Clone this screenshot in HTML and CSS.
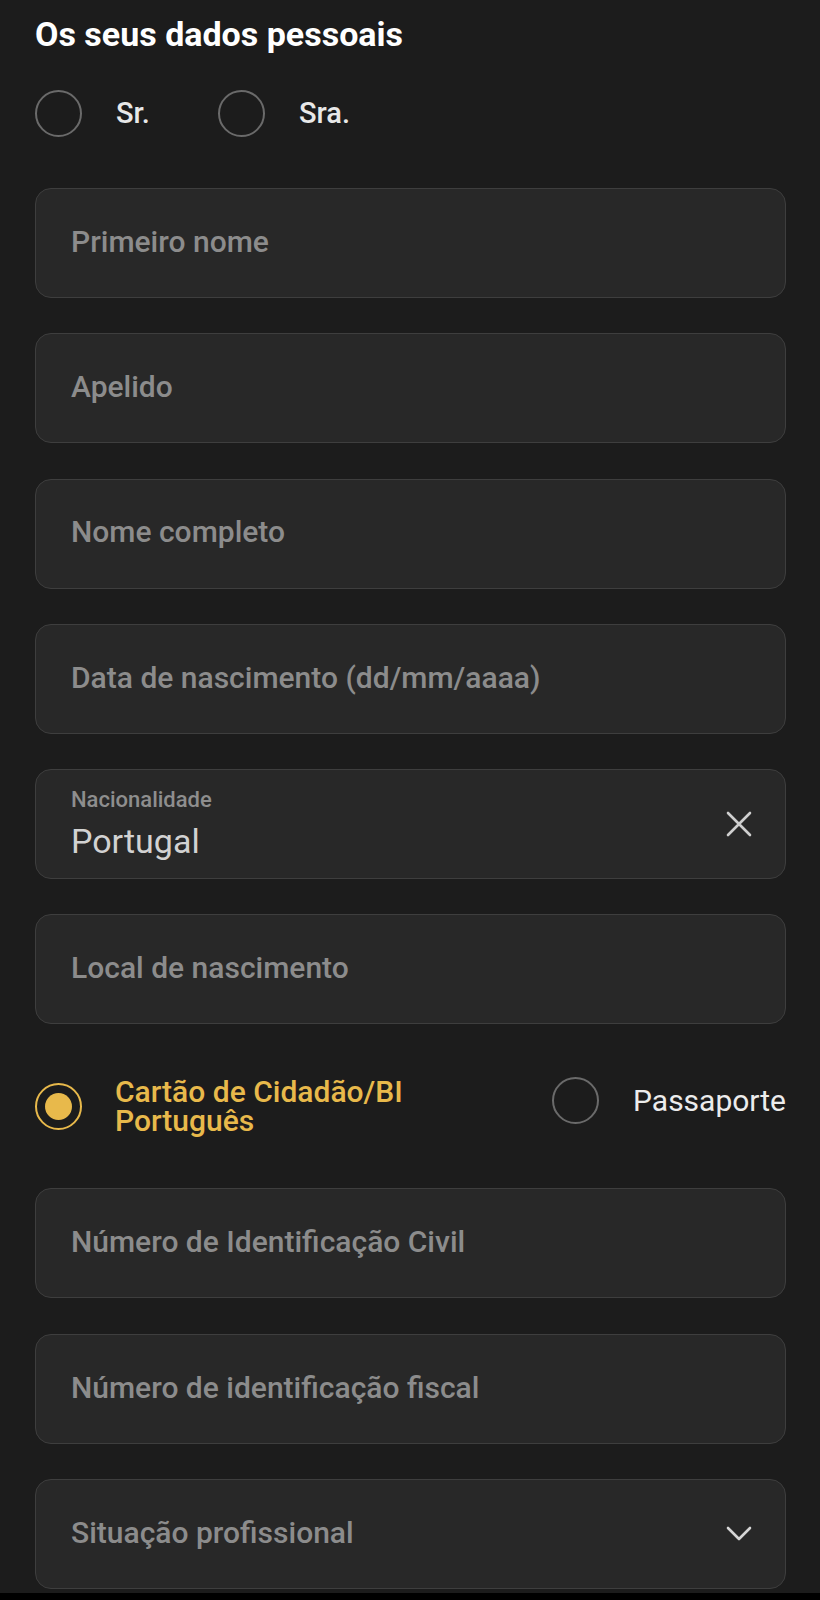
FILE: index.html
```html
<!DOCTYPE html>
<html lang="pt">
<head>
<meta charset="utf-8">
<title>Os seus dados pessoais</title>
<link rel="stylesheet" href="styles.css">
</head>
<body>
<main class="page">
  <h1 class="title">Os seus dados pessoais</h1>

  <div class="gender">
    <label class="radio radio-gender"><span class="dot"></span><span class="radio-text">Sr.</span></label>
    <label class="radio radio-gender"><span class="dot"></span><span class="radio-text">Sra.</span></label>
  </div>

  <div class="fields">
    <div class="field"><span class="placeholder">Primeiro nome</span></div>
    <div class="field"><span class="placeholder">Apelido</span></div>
    <div class="field"><span class="placeholder">Nome completo</span></div>
    <div class="field"><span class="placeholder">Data de nascimento (dd/mm/aaaa)</span></div>
    <div class="field field-filled">
      <div class="filled">
        <span class="float-label">Nacionalidade</span>
        <span class="value">Portugal</span>
      </div>
      <svg class="icon-x" width="26" height="26" viewBox="0 0 26 26" aria-hidden="true">
        <path d="M2 2 L24 24 M24 2 L2 24" stroke="#cfcfcf" stroke-width="2.6" stroke-linecap="round" fill="none"/>
      </svg>
    </div>
    <div class="field"><span class="placeholder">Local de nascimento</span></div>
  </div>

  <div class="doc-row">
    <label class="radio radio-doc checked"><span class="dot"></span><span class="radio-text">Cartão de Cidadão/BI Português</span></label>
    <label class="radio radio-doc"><span class="dot"></span><span class="radio-text">Passaporte</span></label>
  </div>

  <div class="fields">
    <div class="field"><span class="placeholder">Número de Identificação Civil</span></div>
    <div class="field"><span class="placeholder">Número de identificação fiscal</span></div>
    <div class="field field-select">
      <span class="placeholder">Situação profissional</span>
      <svg class="icon-chevron" width="26" height="16" viewBox="0 0 26 16" aria-hidden="true">
        <path d="M2 2 L13 13 L24 2" stroke="#d6d6d6" stroke-width="2.6" stroke-linecap="round" stroke-linejoin="round" fill="none"/>
      </svg>
    </div>
  </div>
</main>
</body>
</html>
```

FILE: styles.css
```css
html {
  background: #000;
}
body {
  margin: 0;
  font-family: Roboto, "Liberation Sans", Arial, sans-serif;
}
.page {
  box-sizing: border-box;
  height: 1593px;
  overflow: hidden;
  background: #1c1c1c;
  padding: 14px 34px 0 35px;
}
.title {
  margin: 0;
  font-size: 34px;
  line-height: 40px;
  font-weight: 700;
  color: #ffffff;
}
.gender {
  display: flex;
  margin-top: 35.5px;
}
.radio {
  display: flex;
  align-items: center;
}
.radio-gender {
  width: 183px;
  gap: 34px;
}
.dot {
  box-sizing: border-box;
  flex: 0 0 auto;
  width: 47px;
  height: 47px;
  border: 2px solid #6a6a6a;
  border-radius: 50%;
  display: flex;
  align-items: center;
  justify-content: center;
}
.radio-text {
  font-size: 29px;
  line-height: 29px;
  font-weight: 500;
  color: #e8e8e8;
}
.fields {
  display: flex;
  flex-direction: column;
  gap: 35.3px;
}
.gender + .fields {
  margin-top: 51.5px;
}
.field {
  box-sizing: border-box;
  height: 110px;
  background: #282828;
  border: 1.5px solid #3e3e3e;
  border-radius: 16px;
  padding: 0 33px 0 35px;
  display: flex;
  align-items: center;
  justify-content: space-between;
}
.placeholder {
  font-size: 30px;
  line-height: 34px;
  font-weight: 500;
  color: #8c8c8c;
  margin-top: -2.5px;
}
.filled {
  display: flex;
  flex-direction: column;
}
.float-label {
  font-size: 22px;
  line-height: 26px;
  font-weight: 500;
  color: #8e8e8e;
  margin-bottom: 8px;
}
.value {
  font-size: 34px;
  line-height: 40px;
  font-weight: 400;
  color: #d2d2d2;
}
.doc-row {
  display: flex;
  justify-content: space-between;
  align-items: flex-start;
  margin: 53px 0 53px;
}
.radio-doc {
  gap: 34px;
}
.radio-doc.checked {
  gap: 33px;
}
.radio-doc .radio-text {
  font-size: 30px;
  color: #ececec;
  font-weight: 400;
}
.radio-doc.checked .radio-text {
  max-width: 320px;
  color: #e8b94b;
  font-weight: 500;
}
.radio-doc.checked .dot {
  border-color: #e8b94b;
}
.radio-doc.checked .dot::after {
  content: "";
  width: 27px;
  height: 27px;
  border-radius: 50%;
  background: #e8b94b;
}
.icon-x,
.icon-chevron {
  flex: 0 0 auto;
}
```
